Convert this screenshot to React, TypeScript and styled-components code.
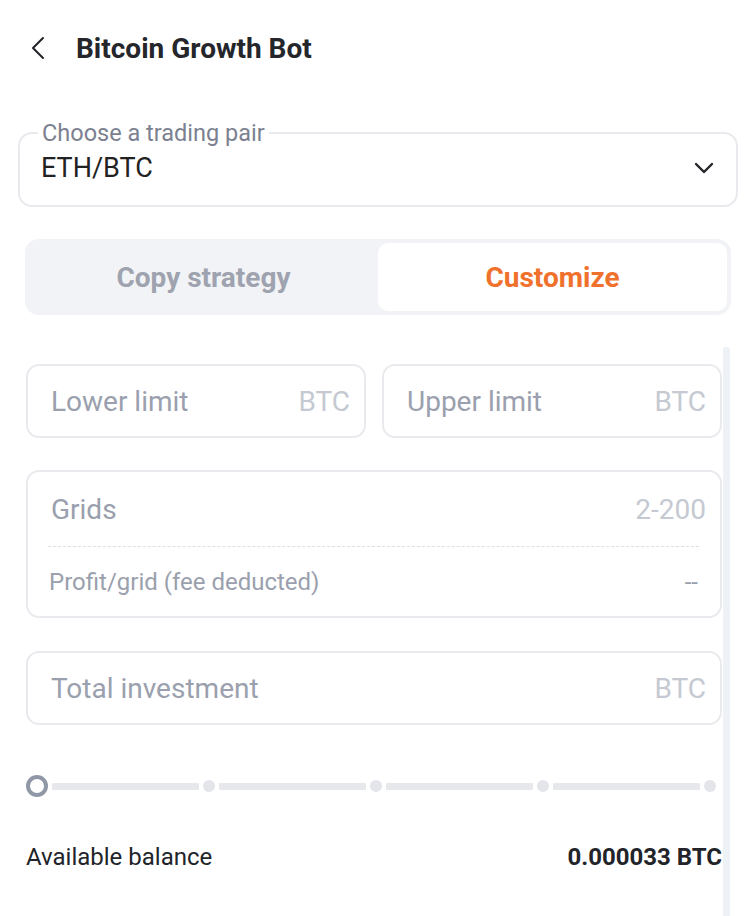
import React from 'react';
import styled, { createGlobalStyle } from 'styled-components';

const GlobalStyle = createGlobalStyle`
  html, body {
    margin: 0;
    padding: 0;
    background: #fff;
    font-family: Roboto, "Liberation Sans", sans-serif;
  }
`;

const Page = styled.div`
  width: 752px;
  height: 916px;
  overflow: hidden;
  color: #22242a;
`;

const Header = styled.div`
  display: flex;
  align-items: center;
  height: 96px;
  padding-left: 31px;
  box-sizing: border-box;
`;

const BackButton = styled.button`
  border: none;
  background: none;
  padding: 0;
  width: 14px;
  height: 24px;
  display: flex;
  align-items: center;
  margin-right: 31px;
`;

const Title = styled.h1`
  margin: 0;
  font-size: 28px;
  font-weight: 700;
  color: #25262b;
`;

const PairField = styled.fieldset`
  margin: 23px 14px 0 18px;
  padding: 0 22px 16px 21px;
  border: 2px solid #e9eaee;
  border-radius: 14px;
  min-width: 0;
`;

const PairLegend = styled.legend`
  padding: 0 4px;
  margin-left: -3px;
  font-size: 23.5px;
  color: #7b8190;
  line-height: 28px;
`;

const PairRow = styled.div`
  display: flex;
  align-items: center;
  justify-content: space-between;
  height: 42px;
`;

const PairValue = styled.span`
  font-size: 27px;
  color: #222;
`;

const Tabs = styled.div`
  margin: 32px 21px 0 25px;
  background: #f1f3f6;
  border-radius: 14px;
  padding: 4px;
  display: grid;
  grid-template-columns: 1fr 1fr;
  height: 76px;
  box-sizing: border-box;
`;

const Tab = styled.div<{ $active?: boolean }>`
  display: flex;
  align-items: center;
  justify-content: center;
  border-radius: 10px;
  font-size: 28px;
  font-weight: 700;
  background: ${(p) => (p.$active ? '#fff' : 'transparent')};
  color: ${(p) => (p.$active ? '#f0712c' : '#9ea3af')};
`;

const Body = styled.div`
  display: flex;
  margin-top: 32px;
`;

const Form = styled.div`
  flex: 1;
  padding: 17px 1px 0 26px;
  display: flex;
  flex-direction: column;
`;

const ScrollTrack = styled.div`
  width: 7px;
  margin-right: 22px;
  background: #eef1f6;
  border-radius: 3px;
  height: 600px;
`;

const Row = styled.div`
  display: grid;
  grid-template-columns: 1fr 1fr;
  gap: 16px;
`;

const InputBox = styled.div`
  height: 74px;
  border: 2px solid #e9eaee;
  border-radius: 13px;
  box-sizing: border-box;
  display: flex;
  align-items: center;
  justify-content: space-between;
  padding: 0 14px 0 23px;
`;

const Placeholder = styled.span`
  font-size: 28px;
  color: #9aa0ad;
`;

const Unit = styled.span`
  font-size: 28px;
  color: #c5c9d1;
`;

const GridCard = styled.div`
  margin-top: 32px;
  border: 2px solid #e9eaee;
  border-radius: 13px;
`;

const GridTop = styled.div`
  display: flex;
  align-items: center;
  justify-content: space-between;
  height: 74px;
  padding: 0 14px 0 23px;
`;

const DashedLine = styled.div`
  margin: 0 21px 0 20px;
  border-top: 1.5px dashed #dcdfe4;
`;

const GridBottom = styled.div`
  display: flex;
  align-items: center;
  justify-content: space-between;
  height: 69px;
  padding: 0 22px 0 21px;
  font-size: 24px;
  color: #9aa0ad;
`;

const TotalBox = styled(InputBox)`
  margin-top: 33px;
`;

const Slider = styled.div`
  margin-top: 50px;
  height: 22px;
  display: flex;
  align-items: center;
  padding-right: 6px;
`;

const Knob = styled.div`
  width: 22px;
  height: 22px;
  border-radius: 50%;
  border: 4.5px solid #9097a6;
  background: #fff;
  box-sizing: border-box;
  flex-shrink: 0;
`;

const Segment = styled.div`
  flex: 1;
  height: 7px;
  background: #e6e8ec;
  margin: 0 4px;
  border-radius: 1px;
`;

const Dot = styled.div`
  width: 12px;
  height: 12px;
  border-radius: 50%;
  background: #e3e5ea;
  flex-shrink: 0;
`;

const Balance = styled.div`
  margin-top: 46px;
  display: flex;
  justify-content: space-between;
  align-items: center;
  font-size: 24px;
  color: #22242a;
`;

const BalanceValue = styled.span`
  font-weight: 700;
`;

const Chevron = ({ dir }: { dir: 'left' | 'down' }) =>
  dir === 'left' ? (
    <svg width="14" height="24" viewBox="0 0 14 24" fill="none">
      <path d="M12 2 L2 12 L12 22" stroke="#22242a" strokeWidth="2" strokeLinecap="round" strokeLinejoin="round" />
    </svg>
  ) : (
    <svg width="20" height="12" viewBox="0 0 20 12" fill="none">
      <path d="M2 2 L10 10 L18 2" stroke="#22242a" strokeWidth="2.4" strokeLinecap="round" strokeLinejoin="round" />
    </svg>
  );

const steps = [0, 1, 2, 3];

const App: React.FC = () => {
  return (
    <Page>
      <GlobalStyle />
      <Header>
        <BackButton aria-label="Back">
          <Chevron dir="left" />
        </BackButton>
        <Title>Bitcoin Growth Bot</Title>
      </Header>

      <PairField>
        <PairLegend>Choose a trading pair</PairLegend>
        <PairRow>
          <PairValue>ETH/BTC</PairValue>
          <Chevron dir="down" />
        </PairRow>
      </PairField>

      <Tabs>
        <Tab>Copy strategy</Tab>
        <Tab $active>Customize</Tab>
      </Tabs>

      <Body>
        <Form>
          <Row>
            <InputBox>
              <Placeholder>Lower limit</Placeholder>
              <Unit>BTC</Unit>
            </InputBox>
            <InputBox>
              <Placeholder>Upper limit</Placeholder>
              <Unit>BTC</Unit>
            </InputBox>
          </Row>

          <GridCard>
            <GridTop>
              <Placeholder>Grids</Placeholder>
              <Unit>2-200</Unit>
            </GridTop>
            <DashedLine />
            <GridBottom>
              <span>Profit/grid (fee deducted)</span>
              <span>--</span>
            </GridBottom>
          </GridCard>

          <TotalBox>
            <Placeholder>Total investment</Placeholder>
            <Unit>BTC</Unit>
          </TotalBox>

          <Slider>
            <Knob />
            {steps.map((s) => (
              <React.Fragment key={s}>
                <Segment />
                <Dot />
              </React.Fragment>
            ))}
          </Slider>

          <Balance>
            <span>Available balance</span>
            <BalanceValue>0.000033 BTC</BalanceValue>
          </Balance>
        </Form>
        <ScrollTrack />
      </Body>
    </Page>
  );
};

export default App;
